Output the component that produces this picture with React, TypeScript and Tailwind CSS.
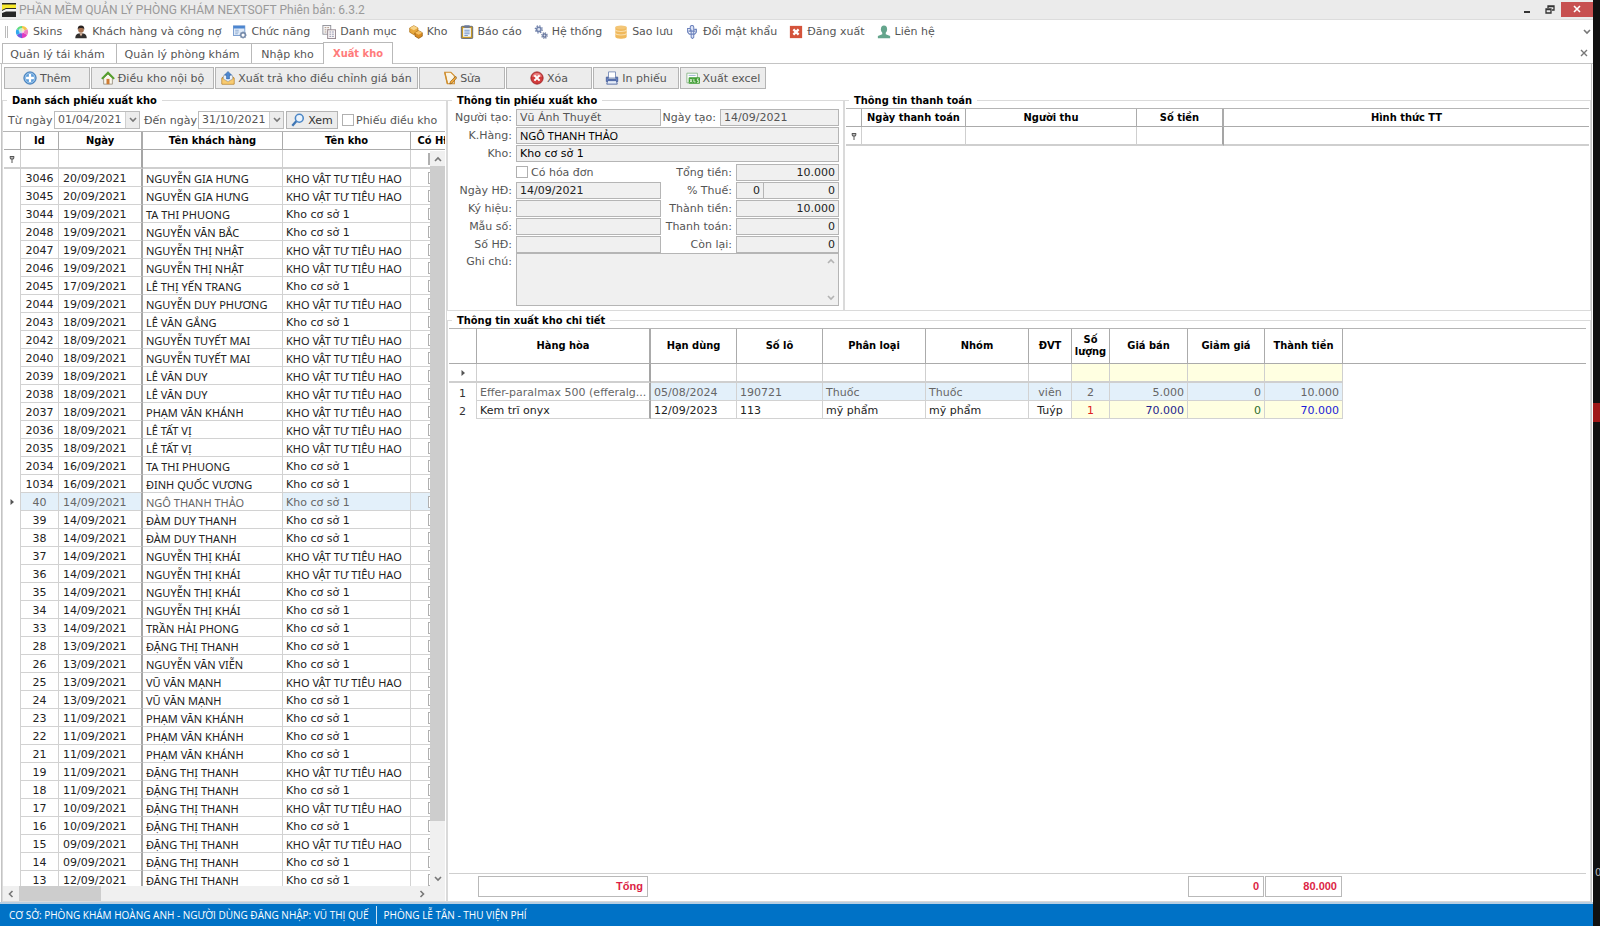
import React from 'react'
import clsx from 'clsx'

const KHO_VT = 'KHO VẬT TƯ TIÊU HAO'
const KHO_1 = 'Kho cơ sở 1'

const slips: [string, string, string, string][] = [
  ['3046', '20/09/2021', 'NGUYỄN GIA HƯNG', KHO_VT],
  ['3045', '20/09/2021', 'NGUYỄN GIA HƯNG', KHO_VT],
  ['3044', '19/09/2021', 'TA THI PHUONG', KHO_1],
  ['2048', '19/09/2021', 'NGUYỄN VĂN BẮC', KHO_1],
  ['2047', '19/09/2021', 'NGUYỄN THỊ NHẬT', KHO_VT],
  ['2046', '19/09/2021', 'NGUYỄN THỊ NHẬT', KHO_VT],
  ['2045', '17/09/2021', 'LÊ THỊ YẾN TRANG', KHO_1],
  ['2044', '19/09/2021', 'NGUYỄN DUY PHƯƠNG', KHO_VT],
  ['2043', '18/09/2021', 'LÊ VĂN GẮNG', KHO_1],
  ['2042', '18/09/2021', 'NGUYỄN TUYẾT MAI', KHO_VT],
  ['2040', '18/09/2021', 'NGUYỄN TUYẾT MAI', KHO_VT],
  ['2039', '18/09/2021', 'LÊ VĂN DUY', KHO_VT],
  ['2038', '18/09/2021', 'LÊ VĂN DUY', KHO_VT],
  ['2037', '18/09/2021', 'PHẠM VĂN KHÁNH', KHO_VT],
  ['2036', '18/09/2021', 'LÊ TẤT VỊ', KHO_VT],
  ['2035', '18/09/2021', 'LÊ TẤT VỊ', KHO_VT],
  ['2034', '16/09/2021', 'TA THI PHUONG', KHO_1],
  ['1034', '16/09/2021', 'ĐINH QUỐC VƯƠNG', KHO_1],
  ['40', '14/09/2021', 'NGÔ THANH THẢO', KHO_1],
  ['39', '14/09/2021', 'ĐÀM DUY THANH', KHO_1],
  ['38', '14/09/2021', 'ĐÀM DUY THANH', KHO_1],
  ['37', '14/09/2021', 'NGUYỄN THỊ KHÁI', KHO_VT],
  ['36', '14/09/2021', 'NGUYỄN THỊ KHÁI', KHO_VT],
  ['35', '14/09/2021', 'NGUYỄN THỊ KHÁI', KHO_1],
  ['34', '14/09/2021', 'NGUYỄN THỊ KHÁI', KHO_1],
  ['33', '14/09/2021', 'TRẦN HẢI PHONG', KHO_1],
  ['28', '13/09/2021', 'ĐẶNG THỊ THANH', KHO_1],
  ['26', '13/09/2021', 'NGUYỄN VĂN VIỄN', KHO_1],
  ['25', '13/09/2021', 'VŨ VĂN MẠNH', KHO_VT],
  ['24', '13/09/2021', 'VŨ VĂN MẠNH', KHO_1],
  ['23', '11/09/2021', 'PHẠM VĂN KHÁNH', KHO_1],
  ['22', '11/09/2021', 'PHẠM VĂN KHÁNH', KHO_1],
  ['21', '11/09/2021', 'PHẠM VĂN KHÁNH', KHO_1],
  ['19', '11/09/2021', 'ĐẶNG THỊ THANH', KHO_VT],
  ['18', '11/09/2021', 'ĐẶNG THỊ THANH', KHO_1],
  ['17', '10/09/2021', 'ĐẶNG THỊ THANH', KHO_VT],
  ['16', '10/09/2021', 'ĐẶNG THỊ THANH', KHO_1],
  ['15', '09/09/2021', 'ĐẶNG THỊ THANH', KHO_VT],
  ['14', '09/09/2021', 'ĐẶNG THỊ THANH', KHO_1],
  ['13', '12/09/2021', 'ĐẶNG THỊ THANH', KHO_1],
]

function Svg({ children, size = 14 }: { children: React.ReactNode; size?: number }) {
  return (
    <svg width={size} height={size} viewBox="0 0 16 16" className="shrink-0" aria-hidden="true">
      {children}
    </svg>
  )
}

const icons = {
  skins: (
    <Svg>
      <path d="M8 8 8 1a7 7 0 0 1 6 3.5z" fill="#f3c64a" />
      <path d="M8 8 14 4.500a7 7 0 0 1 0 7z" fill="#f07fc0" />
      <path d="M8 8 14 11.500A7 7 0 0 1 8 15z" fill="#e03cc0" />
      <path d="M8 8V15a7 7 0 0 1-6-3.500z" fill="#6f5be0" />
      <path d="M8 8 2 11.500a7 7 0 0 1 0-7z" fill="#2fa8ee" />
      <path d="M8 8 2 4.500A7 7 0 0 1 8 1z" fill="#5fdc7c" />
      <circle cx="7.500" cy="6.500" r="3.200" fill="#fff" opacity=".6" />
    </Svg>
  ),
  person: (
    <Svg>
      <path d="M1.500 15c0-4 2.500-5.500 6.500-5.500s6.500 1.500 6.500 5.500z" fill="#33302f" />
      <path d="m6 9.500 2 3.500 2-3.500z" fill="#d8b49c" />
      <circle cx="8" cy="5.500" r="3.300" fill="#a87250" />
      <path d="M4.300 5.500C3.800 2 5.500.5 8 .5s4.300 1.500 3.700 5C11 3.700 9.500 3.500 8 3.500s-3 .2-3.700 2z" fill="#2a2220" />
    </Svg>
  ),
  func: (
    <Svg>
      <rect x=".5" y="1" width="13" height="11" fill="#dfeaf8" stroke="#6f96cc" />
      <path d="M.5 1h13v3H.5z" fill="#4c86d0" />
      <path d="M2.500 6h4M2.500 8h4M2.500 10h3" stroke="#8aa8d0" />
      <circle cx="11.500" cy="11.500" r="2.600" fill="#fff" stroke="#7388a8" strokeWidth="1.600" />
      <path d="M11.500 7.500v1.300M11.500 14.200v1.300M7.500 11.500h1.300M14.200 11.500h1.300M8.700 8.700l1 1M13.300 13.300l1 1M8.700 14.300l1-1M13.300 9.700l1-1" stroke="#7388a8" strokeWidth="1.400" />
    </Svg>
  ),
  list: (
    <Svg>
      <rect x="1" y=".5" width="9" height="10" fill="#f7f7f7" stroke="#8d8d95" />
      <path d="M3 3h5M3 5.500h5M3 8h5" stroke="#a98c7a" strokeDasharray="2 1" />
      <rect x="6.500" y="5.500" width="9" height="10" fill="#faf6f6" stroke="#8d7f88" />
      <path d="M8.500 8h5M8.500 10.500h5M8.500 13h5" stroke="#8588a5" strokeDasharray="2 1" />
    </Svg>
  ),
  boxes: (
    <Svg>
      <path d="m5.500.8 4.700 2.600v4.800L5.500 11 .8 8.200V3.400z" fill="#e8a83c" stroke="#a96a10" strokeWidth=".8" />
      <path d="M.8 3.400 5.500 6l4.700-2.600L5.500.8z" fill="#f8d488" />
      <path d="m11 6.500 4.200 2.300v4L11 15.300l-4.200-2.500v-4z" fill="#d98c22" stroke="#8c540a" strokeWidth=".8" />
      <path d="M6.800 8.800 11 11l4.200-2.200L11 6.500z" fill="#f5c063" />
    </Svg>
  ),
  report: (
    <Svg>
      <rect x="1.500" y="1.500" width="13" height="14" rx="1" fill="#c99a26" stroke="#55617c" />
      <rect x="3.500" y="3.500" width="9" height="10" fill="#eef4fb" />
      <rect x="5" y=".3" width="6" height="3" fill="#6b7a99" />
      <path d="M5 6h6M5 8h6M5 10h6M5 12h4" stroke="#6b8fc5" />
    </Svg>
  ),
  gears: (
    <Svg>
      <circle cx="5.500" cy="5" r="2.500" fill="#dbe2f0" stroke="#7384ac" strokeWidth="1.800" />
      <circle cx="5.500" cy="5" r="4" fill="none" stroke="#7384ac" strokeWidth="1.500" strokeDasharray="1.600 1.540" />
      <circle cx="12" cy="12" r="1.800" fill="#dbe2f0" stroke="#5f6f98" strokeWidth="1.500" />
      <circle cx="12" cy="12" r="3.100" fill="none" stroke="#5f6f98" strokeWidth="1.400" strokeDasharray="1.300 1.130" />
    </Svg>
  ),
  database: (
    <Svg>
      <path d="M1.500 2.500v11c0 3 13 3 13 0v-11z" fill="#f0b95c" />
      <ellipse cx="8" cy="2.700" rx="6.500" ry="2.200" fill="#f3c677" />
      <path d="M1.500 5.500c1 2.500 12 2.500 13 0M1.500 9.500c1 2.500 12 2.500 13 0" fill="none" stroke="#f9dfae" strokeWidth="1.200" />
    </Svg>
  ),
  key: (
    <Svg>
      <path d="M6 7V2.500a2 2 0 0 1 4 0V14l-1.500 1.500L7 14V5" fill="#dfe6f8" stroke="#6d83bd" strokeWidth="1.200" />
      <path d="M6 4H3v4l2 2.500h6L13 8V5h-2.500M4 7h8" fill="none" stroke="#6d83bd" strokeWidth="1.300" />
    </Svg>
  ),
  logout: (
    <Svg>
      <rect x="1" y="1" width="14" height="14" fill="#d4533b" />
      <path d="m5 5 6 6m0-6-6 6" stroke="#fff" strokeWidth="2.600" />
    </Svg>
  ),
  contact: (
    <Svg>
      <ellipse cx="8" cy="4.800" rx="3.500" ry="4.300" fill="#64a58c" />
      <path d="M6 8h4v2.500l5 2V15H1v-2.500l5-2z" fill="#64a58c" />
    </Svg>
  ),
  add: (
    <Svg>
      <circle cx="8" cy="8" r="7" fill="#5b9bd8" stroke="#2e6cae" />
      <circle cx="8" cy="8" r="5.600" fill="none" stroke="#c4def5" strokeWidth=".8" />
      <path d="M8 3.500v9M3.500 8h9" stroke="#fff" strokeWidth="2.600" />
    </Svg>
  ),
  house: (
    <Svg>
      <path d="M3 8v7h10V8L8 3.500z" fill="#fbf8ee" stroke="#9a9180" />
      <path d="M1 9 8 2l7 7" fill="none" stroke="#55a02e" strokeWidth="2.400" />
      <rect x="6.300" y="9" width="3.400" height="6" fill="#cf7c34" />
    </Svg>
  ),
  outbox: (
    <Svg>
      <path d="m1 8 2-2h10l2 2v7H1z" fill="#f0b54a" stroke="#a97420" strokeWidth=".9" />
      <path d="M3 9V5h10v4l-5 3z" fill="#f4f8fd" stroke="#8ba3c4" strokeWidth=".7" />
      <path d="m8 .5 4 4H9.800V9H6.200V4.500H4z" fill="#4d87cf" stroke="#2b5fa5" strokeWidth=".6" />
      <path d="m1.500 9 6.500 4 6.500-4v5.500h-13z" fill="#f7cb73" />
    </Svg>
  ),
  edit: (
    <Svg>
      <path d="M2 1.500h7l4 4v9H5z" fill="#fbf5e6" stroke="#cf8d2c" strokeWidth="1.200" />
      <path d="M2 1.500 5 14.500" stroke="#cf8d2c" strokeWidth="1.600" />
      <path d="m14.500 6-6 6-.8 2.800 2.800-.8 5-6z" fill="#f2a93b" stroke="#8a5c1c" strokeWidth=".8" />
    </Svg>
  ),
  remove: (
    <Svg>
      <circle cx="8" cy="8" r="7" fill="#d23b3b" stroke="#9c1f22" />
      <path d="M2.500 6.500a5.700 5.700 0 0 1 11 0z" fill="#e98080" />
      <path d="m5 5 6 6m0-6-6 6" stroke="#fff" strokeWidth="2.400" />
    </Svg>
  ),
  print: (
    <Svg>
      <path d="M4 1h8v7H4z" fill="#fff" stroke="#7488b5" />
      <path d="M1.500 7h2v2.500h9V7h2v5h-13z" fill="#6f8ccb" stroke="#3b5494" strokeWidth=".9" />
      <path d="M3 11h10l1 4H2z" fill="#e4ebf8" stroke="#3b5494" strokeWidth=".9" />
    </Svg>
  ),
  excel: (
    <Svg>
      <path d="M1 2.500h12v11H1z" fill="#fff" stroke="#86b586" />
      <path d="M3 5h8" stroke="#8fa5c8" />
      <rect x="3" y="7" width="13" height="7.500" rx="1" fill="#3f9d34" />
      <path d="m4.500 9 2.500 4m0-4-2.500 4M9 9v3.500h2M14.500 9H13v2h1.500v2h-2" fill="none" stroke="#e9f7e4" />
    </Svg>
  ),
  search: (
    <Svg>
      <circle cx="9.500" cy="6" r="4.500" fill="#eaf3fc" stroke="#4b86c6" strokeWidth="1.800" />
      <path d="m6 9.500-4.500 5" stroke="#3f76b4" strokeWidth="2.600" />
    </Svg>
  ),
}

function Chevron({ d = 'm1 2 3 3 3-3', className }: { d?: string; className?: string }) {
  return (
    <svg width="8" height="8" viewBox="0 0 8 8" className={clsx('shrink-0 text-[#777]', className)} aria-hidden="true">
      <path d={d} fill="none" stroke="currentColor" strokeWidth="1.600" />
    </svg>
  )
}

const UP = 'm1 6 3-3 3 3'
const LEFT = 'M5.500 1 2.500 4l3 3'
const RIGHT = 'm2.500 1 3 3-3 3'

function FilterMark() {
  return (
    <svg width="6" height="8" viewBox="0 0 6 8" className="mx-auto" aria-hidden="true">
      <path d="M1 1.500h4L4.500 4h-3z" fill="#bbb" stroke="#555" />
      <path d="M3 4v4" stroke="#555" />
    </svg>
  )
}

function RowMark() {
  return (
    <svg width="6" height="8" viewBox="0 0 6 8" className="mx-auto" aria-hidden="true">
      <path d="m1.500 1 3.500 3-3.500 3z" fill="#555" />
    </svg>
  )
}

const menu: [React.ReactNode, string][] = [
  [icons.skins, 'Skins'],
  [icons.person, 'Khách hàng và công nợ'],
  [icons.func, 'Chức năng'],
  [icons.list, 'Danh mục'],
  [icons.boxes, 'Kho'],
  [icons.report, 'Báo cáo'],
  [icons.gears, 'Hệ thống'],
  [icons.database, 'Sao lưu'],
  [icons.key, 'Đổi mật khẩu'],
  [icons.logout, 'Đăng xuất'],
  [icons.contact, 'Liên hệ'],
]

function TitleBar() {
  return (
    <header className="flex h-5 shrink-0 items-center border-b border-[#dcdcdc] bg-[#ebebeb]">
      <svg width="14" height="14" viewBox="0 0 14 14" className="ml-0.5 shrink-0" aria-hidden="true">
        <path d="M0 0h14v14H0z" fill="#262626" />
        <path d="M0 1.500h14V5H4L0 7z" fill="#f7e92c" />
        <path d="M0 8 4 6h10v2.500H4L0 10z" fill="#f4f4f4" />
      </svg>
      <h1 className="ml-[3px] flex-1 font-['Roboto',sans-serif] text-[12px] leading-[18px] text-[#9a9a9a]">
        PHẦN MỀM QUẢN LÝ PHÒNG KHÁM NEXTSOFT Phiên bản: 6.3.2
      </h1>
      <button aria-label="Thu nhỏ" className="flex h-4 w-6 items-center justify-center">
        <span className="mt-1 h-0.5 w-1.5 bg-[#333]" />
      </button>
      <button aria-label="Khôi phục" className="flex h-4 w-[22px] items-center justify-center">
        <svg width="10" height="9" viewBox="0 0 10 9" aria-hidden="true">
          <path d="M3 3V1h6v4H7M1 4h5v4H1zM3 1.500h6M1 4.500h5" fill="none" stroke="#333" strokeWidth="1.300" />
        </svg>
      </button>
      <button aria-label="Đóng" className="mb-[1px] flex h-[15px] w-8 items-center justify-center bg-[#c75050]">
        <svg width="8" height="8" viewBox="0 0 8 8" aria-hidden="true">
          <path d="m1 1 6 6m0-6L1 7" stroke="#fff" strokeWidth="1.600" />
        </svg>
      </button>
    </header>
  )
}

function MenuBar() {
  return (
    <nav className="flex h-[23px] shrink-0 items-center pl-[5px] pr-0.5">
      <span className="mr-[7px] h-3 w-[3px] border-x border-[#bbb]" />
      <div className="flex flex-1 items-center gap-3">
        {menu.map(([icon, label]) => (
          <a key={label} href="#" className="flex items-center gap-1 whitespace-nowrap">
            {icon}
            {label}
          </a>
        ))}
      </div>
      <Chevron />
    </nav>
  )
}

function Tabs() {
  const tab = 'h-5 border border-b-0 border-[#b9b9b9] pt-px whitespace-nowrap'
  return (
    <div className="flex h-[21px] shrink-0 items-end border-b border-[#c4c4c4] pl-0.5">
      <button className={clsx(tab, 'w-[115px] pr-1')}>Quản lý tái khám</button>
      <button className={clsx(tab, 'w-[135px] border-l-0 pr-1')}>Quản lý phòng khám</button>
      <button className={clsx(tab, 'w-[71px] border-x-0')}>Nhập kho</button>
      <button className="-mb-px h-[22px] w-[70px] border border-b-0 border-[#b9b9b9] bg-white font-['DejaVu_Sans_Condensed','DejaVu_Sans',sans-serif] font-bold whitespace-nowrap text-[#ff7b7b]">
        Xuất kho
      </button>
      <button aria-label="Đóng tab" className="mb-1.5 ml-auto mr-[5px]">
        <svg width="8" height="8" viewBox="0 0 8 8" aria-hidden="true">
          <path d="m1 1 6 6m0-6L1 7" stroke="#777" strokeWidth="1.400" />
        </svg>
      </button>
    </div>
  )
}

function ToolButton({ icon, label, className }: { icon: React.ReactNode; label: string; className: string }) {
  return (
    <button
      className={clsx(
        'flex h-[22px] items-center justify-center gap-[3px] border border-[#b4b4b4] bg-[#ececec] whitespace-nowrap',
        className
      )}
    >
      {icon}
      {label}
    </button>
  )
}

function Group({ title, className, children }: { title: string; className?: string; children: React.ReactNode }) {
  return (
    <fieldset className={clsx('flex min-h-0 min-w-0 flex-col border border-[#dadada]', className)}>
      <legend className="ml-1 px-[5px] font-['DejaVu_Sans_Condensed','DejaVu_Sans',sans-serif] leading-[15px] font-bold text-black">
        {title}
      </legend>
      {children}
    </fieldset>
  )
}

function DateSelect({ id, value }: { id: string; value: string }) {
  return (
    <span className="relative flex h-[18px] w-[86px] shrink-0 items-center border border-[#bcbcbc] bg-white">
      <select id={id} defaultValue={value} className="h-4 w-full appearance-none pl-[3px] leading-4 outline-none">
        <option>{value}</option>
      </select>
      <span className="pointer-events-none absolute inset-y-0 right-0 flex w-[14px] items-center justify-center border-l border-[#cfcfcf] bg-[#ececec]">
        <Chevron />
      </span>
    </span>
  )
}

const check = 'block size-3 shrink-0 appearance-none border border-[#b0b0b0] bg-white'
const th = "border-b border-[#ababab] p-0 text-center font-['DejaVu_Sans_Condensed','DejaVu_Sans',sans-serif] font-bold text-black"

function SlipTable() {
  const td = 'h-[18px] border-b border-r border-[#d2d2d2] p-0 leading-[15px] whitespace-nowrap'
  const caps = "pt-px font-['Noto_Sans',sans-serif]"
  const filter = 'h-[19px] border-b-2 border-r border-[#cfcfcf] p-0'
  return (
    <div className="relative mr-px min-h-0 flex-1 overflow-hidden border-t border-[#b5b5b5] pl-px">
      <table className="w-[454px] table-fixed border-separate border-spacing-0">
        <colgroup>
          <col className="w-[17px]" />
          <col className="w-[38px]" />
          <col className="w-[84px]" />
          <col className="w-[140px]" />
          <col className="w-[128px]" />
          <col className="w-[47px]" />
        </colgroup>
        <thead>
          <tr className="h-[18px] leading-[17px] whitespace-nowrap">
            <th className={clsx(th, 'border-r')} />
            <th className={clsx(th, 'border-r')}>Id</th>
            <th className={clsx(th, 'border-r-2')}>Ngày</th>
            <th className={clsx(th, 'border-r')}>Tên khách hàng</th>
            <th className={clsx(th, 'border-r')}>Tên kho</th>
            <th className={th}>Có HĐ</th>
          </tr>
        </thead>
        <tbody>
          <tr>
            <td className={filter}><FilterMark /></td>
            <td className={filter} />
            <td className={clsx(filter, 'border-r-2 border-r-[#a5a5a5]')} />
            <td className={filter} />
            <td className={filter} />
            <td className={filter}>
              <input type="checkbox" aria-label="Lọc có HĐ" className={clsx(check, 'mx-auto border-l-2')} />
            </td>
          </tr>
          {slips.map(([id, date, name, store]) => {
            const active = id === '40'
            const bg = active ? 'bg-[#e3f0fa] text-[#666]' : 'text-[#222]'
            return (
              <tr key={id}>
                <td className="border-r border-[#d2d2d2] p-0">{active && <RowMark />}</td>
                <td className={clsx(td, bg, 'pt-0.5 text-center')}>{id}</td>
                <td className={clsx(td, bg, 'border-r-2 border-r-[#a5a5a5] pt-0.5 pl-1')}>{date}</td>
                <td className={clsx(td, caps, active ? 'text-[#666]' : 'text-[#222]', 'pl-[3px]')}>{name}</td>
                <td className={clsx(td, bg, 'pl-[3px]', store === KHO_VT ? caps : 'pt-0.5')}>{store}</td>
                <td className={clsx(td, bg)}>
                  <input type="checkbox" aria-label={`Có HĐ ${id}`} className={clsx(check, 'mx-auto')} />
                </td>
              </tr>
            )
          })}
        </tbody>
      </table>
      {/* scroll bars */}
      <div className="absolute top-[19px] right-0 bottom-0 flex w-[15px] flex-col items-center bg-[#f0f0f0]">
        <span className="flex h-[15px] items-center"><Chevron d={UP} /></span>
        <span className="h-[655px] w-full bg-[#cdcdcd]" />
        <span className="mt-auto mb-[15px] flex h-[15px] items-center"><Chevron /></span>
      </div>
      <div className="absolute right-0 bottom-0 left-0 flex h-[15px] items-center bg-[#f0f0f0]">
        <span className="flex w-4 justify-center"><Chevron d={LEFT} /></span>
        <span className="h-full w-[82px] bg-[#cdcdcd]" />
        <span className="mr-[15px] ml-auto flex w-4 justify-center"><Chevron d={RIGHT} /></span>
      </div>
    </div>
  )
}

const box = 'h-[17px] min-w-0 border border-[#b5b5b5] bg-[#f0f0f0] outline-none leading-[15px]'

function Field({ id, label, value = '', labelClass, className }: { id: string; label: string; value?: string; labelClass: string; className: string }) {
  return (
    <>
      <label htmlFor={id} className={clsx('shrink-0 text-right whitespace-nowrap', labelClass)}>{label}</label>
      <input id={id} readOnly value={value} className={clsx(box, className)} />
    </>
  )
}

function SlipForm() {
  const row = 'flex h-[18px] items-center gap-1'
  const left = 'w-16'
  const half = 'w-[145px] px-[3px] text-[#222]'
  const wide = 'flex-1 px-[3px] text-black'
  const sum = 'w-[103px] px-[3px] text-right text-[#222]'
  return (
    <Group title="Thông tin phiếu xuất kho" className="w-[397px] shrink-0">
      <div className="flex flex-col gap-px pr-1">
        <div>
          <div className={row}>
            <Field id="creator" label="Người tạo:" value="Vũ Ánh Thuyết" labelClass={left} className="w-[145px] px-[3px]" />
            <label htmlFor="created" className="-ml-1 flex-1 text-right whitespace-nowrap">Ngày tạo:</label>
            <input id="created" readOnly value="14/09/2021" className={clsx(box, 'w-[119px] px-[3px]')} />
          </div>
          <div className={row}>
            <Field id="customer" label="K.Hàng:" value="NGÔ THANH THẢO" labelClass={left} className={clsx(wide, "font-['Noto_Sans',sans-serif]")} />
          </div>
          <div className={row}>
            <Field id="store" label="Kho:" value={KHO_1} labelClass={left} className={wide} />
          </div>
        </div>
        <div>
          <div className={clsx(row, 'justify-between')}>
            <label className="ml-[68px] flex items-center gap-[3px]">
              <input type="checkbox" className={check} />
              Có hóa đơn
            </label>
            <span className="flex items-center gap-1">
              <Field id="total" label="Tổng tiền:" value="10.000" labelClass="" className={sum} />
            </span>
          </div>
          <div className={row}>
            <Field id="billdate" label="Ngày HĐ:" value="14/09/2021" labelClass={left} className={half} />
            <label htmlFor="tax" className="flex-1 text-right whitespace-nowrap">% Thuế:</label>
            <span className="flex">
              <input id="tax" readOnly value="0" className={clsx(box, 'w-7 px-[3px] text-right text-[#222]')} />
              <input aria-label="Tiền thuế" readOnly value="0" className={clsx(box, 'w-[75px] border-l-0 px-[3px] text-right text-[#222]')} />
            </span>
          </div>
          <div className={row}>
            <Field id="symbol" label="Ký hiệu:" labelClass={left} className={half} />
            <Field id="amount" label="Thành tiền:" value="10.000" labelClass="flex-1" className={sum} />
          </div>
          <div className={row}>
            <Field id="form" label="Mẫu số:" labelClass={left} className={half} />
            <Field id="paid" label="Thanh toán:" value="0" labelClass="flex-1" className={sum} />
          </div>
          <div className={row}>
            <Field id="billno" label="Số HĐ:" labelClass={left} className={half} />
            <Field id="rest" label="Còn lại:" value="0" labelClass="flex-1" className={sum} />
          </div>
          <div className="flex gap-1">
            <label htmlFor="note" className="w-16 shrink-0 text-right leading-[18px]">Ghi chú:</label>
            <div className="relative flex flex-1">
              <textarea id="note" readOnly className="h-[53px] flex-1 resize-none border border-[#b5b5b5] bg-[#f0f0f0] outline-none" />
              <span className="absolute inset-y-1 right-1 flex flex-col justify-between">
                <Chevron d={UP} className="opacity-50" />
                <Chevron className="opacity-50" />
              </span>
            </div>
          </div>
        </div>
      </div>
    </Group>
  )
}

function PaymentTable() {
  const filter = 'h-[19px] border-b-2 border-r border-[#cfcfcf] p-0'
  return (
    <Group title="Thông tin thanh toán" className="flex-1">
      <div className="px-px">
        <table className="w-full table-fixed border-separate border-spacing-0 border-t border-[#b5b5b5]">
          <colgroup>
            <col className="w-4" />
            <col className="w-[104px]" />
            <col className="w-[171px]" />
            <col className="w-[87px]" />
            <col />
          </colgroup>
          <thead>
            <tr className="h-[18px] leading-[17px] whitespace-nowrap">
              <th className={clsx(th, 'border-r')} />
              <th className={clsx(th, 'border-r')}>Ngày thanh toán</th>
              <th className={clsx(th, 'border-r')}>Người thu</th>
              <th className={clsx(th, 'border-r-2')}>Số tiền</th>
              <th className={th}>Hình thức TT</th>
            </tr>
          </thead>
          <tbody>
            <tr>
              <td className={filter}><FilterMark /></td>
              <td className={filter} />
              <td className={filter} />
              <td className={clsx(filter, 'border-r-2 border-r-[#a5a5a5]')} />
              <td className="border-b-2 border-[#cfcfcf] p-0" />
            </tr>
          </tbody>
        </table>
      </div>
    </Group>
  )
}

const heads = ['Hàng hòa', 'Hạn dùng', 'Số lô', 'Phân loại', 'Nhóm', 'ĐVT', 'Số lượng', 'Giá bán', 'Giảm giá', 'Thành tiền']

const items = [
  ['1', 'Effer-paralmax 500 (efferalg...', '05/08/2024', '190721', 'Thuốc', 'Thuốc', 'viên', '2', '5.000', '0', '10.000'],
  ['2', 'Kem trĩ onyx', '12/09/2023', '113', 'mỹ phẩm', 'mỹ phẩm', 'Tuýp', '1', '70.000', '0', '70.000'],
]

const itemColors = ['', '', '', '', '', '', '', 'text-[#e02020]', 'text-[#23238e]', 'text-[#2c6e2c]', 'text-[#1c1cd8]']

function DetailTable() {
  const total = "flex h-[21px] items-center justify-end border border-[#b9b9b9] pr-1 font-['Liberation_Sans',sans-serif] font-bold text-[#dc1f45]"
  return (
    <Group title="Thông tin xuất kho chi tiết" className="mt-0.5 flex-1">
      <div className="flex min-h-0 flex-1 flex-col pr-1 pl-px">
        <table className="w-full table-fixed border-separate border-spacing-0 border-t border-[#b5b5b5]">
          <colgroup>
            <col className="w-[28px]" />
            <col className="w-[174px]" />
            <col className="w-[86px]" />
            <col className="w-[86px]" />
            <col className="w-[103px]" />
            <col className="w-[103px]" />
            <col className="w-[43px]" />
            <col className="w-[38px]" />
            <col className="w-[78px]" />
            <col className="w-[77px]" />
            <col className="w-[78px]" />
            <col />
          </colgroup>
          <thead>
            <tr className="h-[35px] leading-[12px]">
              <th className={clsx(th, 'border-r')} />
              {heads.map((h, i) => (
                <th key={h} className={clsx(th, i === 0 ? 'border-r-2' : 'border-r')}>{h}</th>
              ))}
              <th className={th} />
            </tr>
          </thead>
          <tbody>
            <tr>
              <td className="h-[19px] border-r border-b-2 border-[#cfcfcf] p-0"><RowMark /></td>
              {heads.map((h, i) => (
                <td
                  key={h}
                  className={clsx(
                    'h-[19px] border-b-2 border-[#cfcfcf] p-0',
                    i === 0 ? 'border-r-2 border-r-[#a5a5a5]' : 'border-r',
                    i > 5 && 'bg-[#ffffe1]'
                  )}
                />
              ))}
              <td />
            </tr>
            {items.map((row, r) => (
              <tr key={r} className={r === 0 ? 'text-[#666]' : 'text-[#222]'}>
                {row.map((cell, i) => (
                  <td
                    key={i}
                    className={clsx(
                      'h-[18px] p-0 pt-0.5 leading-[15px] whitespace-nowrap',
                      i === 0 && 'border-r border-[#d2d2d2] text-center text-[#333]',
                      i === 1 && 'border-r-2 border-b border-r-[#a5a5a5] border-b-[#d2d2d2]',
                      i > 1 && 'border-r border-b border-[#d2d2d2]',
                      i > 0 && i < 6 && 'pl-[3px]',
                      (i === 6 || i === 7) && 'text-center',
                      i > 7 && 'pr-[3px] text-right',
                      i > 1 && r === 0 && 'bg-[#e3f0fa]',
                      i > 6 && r === 1 && 'bg-[#ffffe1]',
                      r === 1 && itemColors[i]
                    )}
                  >
                    {cell}
                  </td>
                ))}
                <td />
              </tr>
            ))}
          </tbody>
        </table>
        <div className="mt-auto flex border-t border-[#cfcfcf] pt-0.5 pb-1">
          <output className={clsx(total, 'ml-[29px] w-[170px]')}>Tổng</output>
          <output className={clsx(total, 'ml-[540px] w-[76px]')}>0</output>
          <output className={clsx(total, 'ml-px w-[77px]')}>80.000</output>
        </div>
      </div>
    </Group>
  )
}

function App() {
  return (
    <div className="flex h-screen overflow-hidden bg-white font-['DejaVu_Sans',sans-serif] text-[11px] leading-[15px] text-[#555]">
      <div className="flex min-w-0 flex-1 flex-col">
        <TitleBar />
        <MenuBar />
        <Tabs />
        <main className="mr-px ml-px flex min-h-0 flex-1 flex-col border-r border-l border-[#c4c4c4]">
          <div className="flex gap-px pt-[3px] pb-1 pl-0.5">
            <ToolButton icon={icons.add} label="Thêm" className="w-[86px]" />
            <ToolButton icon={icons.house} label="Điều kho nội bộ" className="w-[123px]" />
            <ToolButton icon={icons.outbox} label="Xuất trả kho điều chỉnh giá bán" className="w-[203px]" />
            <ToolButton icon={icons.edit} label="Sửa" className="w-[86px]" />
            <ToolButton icon={icons.remove} label="Xóa" className="w-[86px]" />
            <ToolButton icon={icons.print} label="In phiếu" className="w-[86px]" />
            <ToolButton icon={icons.excel} label="Xuất excel" className="w-[86px]" />
          </div>
          <div className="flex min-h-0 flex-1">
            <Group title="Danh sách phiếu xuất kho" className="w-[445px] shrink-0">
              <div className="flex items-center pt-[3px] pb-[2px] pl-[5px] whitespace-nowrap">
                <label htmlFor="from" className="w-[46px]">Từ ngày</label>
                <DateSelect id="from" value="01/04/2021" />
                <label htmlFor="to" className="w-[58px] pl-1">Đến ngày</label>
                <DateSelect id="to" value="31/10/2021" />
                <button className="ml-0.5 flex h-[18px] w-[52px] items-center justify-center gap-[3px] border border-[#b4b4b4] bg-[#ececec] text-[#333]">
                  {icons.search}
                  Xem
                </button>
                <label className="ml-1 flex items-center gap-0.5">
                  <input type="checkbox" className={check} />
                  Phiếu điều kho
                </label>
              </div>
              <SlipTable />
            </Group>
            <div className="flex min-w-0 flex-1 flex-col">
              <div className="flex h-[218px] shrink-0">
                <SlipForm />
                <PaymentTable />
              </div>
              <DetailTable />
            </div>
          </div>
        </main>
        <footer className="flex h-6 shrink-0 items-center border-t-2 border-[#b9cfe2] bg-[#0072c6] pl-[9px] font-['Open_Sans',sans-serif] text-[10px] whitespace-nowrap text-white">
          <span>CƠ SỞ: PHÒNG KHÁM HOÀNG ANH - NGƯỜI DÙNG ĐĂNG NHẬP: VŨ THỊ QUẾ</span>
          <span className="mx-[7px] h-[18px] w-px bg-white/80" />
          <span>PHÒNG LỄ TÂN - THU VIỆN PHÍ</span>
        </footer>
      </div>
      {/* edge of the desktop behind the window */}
      <aside className="flex w-[7px] shrink-0 flex-col overflow-hidden bg-[#111] pt-[403px]">
        <span className="h-[19px] shrink-0 bg-[#a01818]" />
        <span className="mt-auto mb-[46px] pl-0.5 text-[10px] leading-[15px] text-[#bbb]">0</span>
      </aside>
    </div>
  )
}

export default App
